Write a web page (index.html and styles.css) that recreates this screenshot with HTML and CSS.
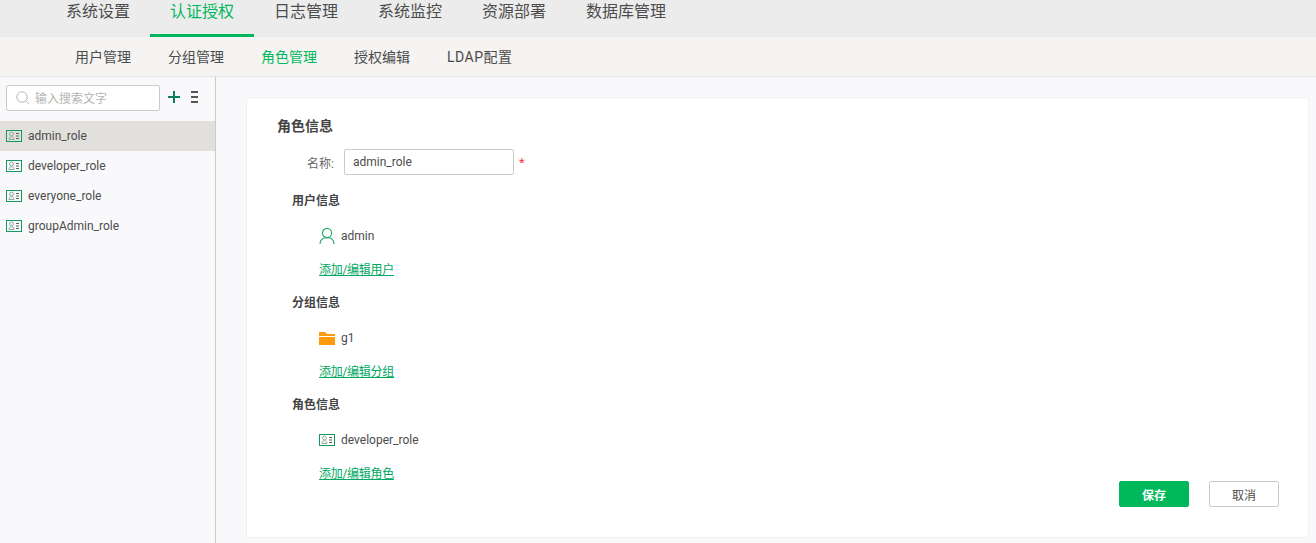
FILE: index.html
```html
<!DOCTYPE html>
<html lang="zh-CN">
<head>
<meta charset="utf-8">
<title>角色管理</title>
<link rel="stylesheet" href="styles.css">
</head>
<body>
<svg class="defs" width="0" height="0" aria-hidden="true">
  <symbol id="role" viewBox="0 0 16 12">
    <rect x="0.5" y="0.5" width="15" height="11" fill="none" stroke="#129a58"/>
    <circle cx="5.5" cy="4" r="1.9" fill="none" stroke="#8fa89b"/>
    <path d="M3 9.5c0-2 1-2.8 2.5-2.8s2.5.8 2.5 2.8z" fill="none" stroke="#8fa89b"/>
    <path d="M10 3.5h3M10 6h3M10 8.5h3" stroke="#56665f"/>
  </symbol>
</svg>
<nav class="topnav">
  <a class="tab">系统设置</a>
  <a class="tab active">认证授权</a>
  <a class="tab">日志管理</a>
  <a class="tab">系统监控</a>
  <a class="tab">资源部署</a>
  <a class="tab">数据库管理</a>
</nav>
<nav class="subnav">
  <a class="subtab">用户管理</a>
  <a class="subtab">分组管理</a>
  <a class="subtab active">角色管理</a>
  <a class="subtab">授权编辑</a>
  <a class="subtab ldap">LDAP配置</a>
</nav>
<div class="main">
  <aside class="sidebar">
    <div class="toolbar">
      <div class="search">
        <svg class="search-icon" viewBox="0 0 14 14" width="14" height="14"><circle cx="6" cy="6" r="5.2" fill="none" stroke="#b8b8b4"/><path d="M9.8 9.8l3.2 3.2" stroke="#b8b8b4"/></svg>
        <span class="placeholder">输入搜索文字</span>
      </div>
      <svg class="plus" viewBox="0 0 12 12" width="12" height="12"><path d="M6 0v12M0 6h12" stroke="#0b7f5e" stroke-width="2"/></svg>
      <svg class="more" viewBox="0 0 7 12" width="7" height="12"><path d="M0 1h7M0 6h7M0 11h7" stroke="#555" stroke-width="2"/></svg>
    </div>
    <ul class="role-list">
      <li class="role selected"><svg class="role-icon"><use href="#role"/></svg>admin_role</li>
      <li class="role"><svg class="role-icon"><use href="#role"/></svg>developer_role</li>
      <li class="role"><svg class="role-icon"><use href="#role"/></svg>everyone_role</li>
      <li class="role"><svg class="role-icon"><use href="#role"/></svg>groupAdmin_role</li>
    </ul>
  </aside>
  <section class="content">
    <div class="card">
      <h2 class="title">角色信息</h2>
      <div class="name-row">
        <label class="name-label">名称:</label>
        <div class="name-input">admin_role</div>
        <span class="req">*</span>
      </div>
      <h3 class="sub">用户信息</h3>
      <div class="entry">
        <svg class="user-icon" viewBox="0 0 16 18" width="16" height="18"><circle cx="8" cy="6" r="4.6" fill="none" stroke="#2bab6b" stroke-width="1.2"/><path d="M1 17c0-4 3-6.4 7-6.4s7 2.4 7 6.4" fill="none" stroke="#2bab6b" stroke-width="1.2"/></svg>
        <span>admin</span>
      </div>
      <a class="edit">添加/编辑用户</a>
      <h3 class="sub">分组信息</h3>
      <div class="entry">
        <svg class="folder-icon" viewBox="0 0 16 13" width="16" height="13"><path d="M0 0h6l2 2h8v2H0z" fill="#ff9a0e"/><path d="M0 5h16v8H0z" fill="#ff9a0e"/></svg>
        <span>g1</span>
      </div>
      <a class="edit">添加/编辑分组</a>
      <h3 class="sub">角色信息</h3>
      <div class="entry">
        <svg class="role-icon"><use href="#role"/></svg>
        <span>developer_role</span>
      </div>
      <a class="edit">添加/编辑角色</a>
      <div class="actions">
        <button class="btn primary">保存</button>
        <button class="btn">取消</button>
      </div>
    </div>
  </section>
</div>
</body>
</html>
```
FILE: styles.css
```css
* { box-sizing: border-box; }
html, body { height: 100%; }
body {
  margin: 0;
  height: 543px;
  overflow: hidden;
  display: flex;
  flex-direction: column;
  font-family: Roboto, "Noto Sans CJK SC", sans-serif;
  font-size: 12px;
  color: #4c4c4c;
  background: #f9f9fb;
}
.defs { position: absolute; }
.topnav {
  display: flex;
  height: 37px;
  padding-left: 46px;
  background: #ececec;
}
.tab {
  padding: 0 20px;
  height: 37px;
  font-size: 16px;
  line-height: 23px;
  color: #4c4c4c;
}
.tab.active {
  color: #00b85c;
  border-bottom: 3px solid #00b85c;
}
.subnav {
  display: flex;
  gap: 37px;
  height: 40px;
  padding-left: 75px;
  background: #f5f4f2;
  border-bottom: 1px solid #e6e6e6;
}
.subtab {
  font-size: 14px;
  line-height: 41px;
  color: #4c4c4c;
}
.subtab.active { color: #00b85c; }
.ldap { letter-spacing: 0.5px; }
.main { flex: 1; display: flex; min-height: 0; }
.sidebar {
  width: 216px;
  flex: none;
  border-right: 1px solid #cdcbc6;
}
.toolbar {
  display: flex;
  align-items: flex-start;
  height: 44px;
  padding: 8px 0 0 6px;
}
.search {
  display: flex;
  align-items: center;
  gap: 5px;
  width: 154px;
  height: 26px;
  padding-left: 9px;
  background: #fff;
  border: 1px solid #cdcbc6;
  border-radius: 2px;
  color: #b4b4b0;
}
.placeholder { margin-top: -2px; }
.plus { margin: 6px 0 0 8px; }
.more { margin: 6px 0 0 11px; }
.role-list { list-style: none; margin: 0; padding: 0; }
.role {
  display: flex;
  align-items: center;
  gap: 6px;
  height: 30px;
  padding-left: 6px;
}
.role.selected { background: #e1e0dd; }
.role-icon { width: 16px; height: 12px; flex: none; }
.content { flex: 1; padding: 20px 7px 5px 30px; min-width: 0; }
.card {
  position: relative;
  height: 441px;
  padding: 20px 30px 0;
  background: #fff;
  border: 1px solid #f0f0f0;
  border-radius: 3px;
}
.title {
  margin: 0;
  font-size: 14px;
  font-weight: 700;
  line-height: 16px;
  color: #444;
}
.sub {
  margin: 0 0 0 15px;
  font-size: 12px;
  font-weight: 700;
  line-height: 16px;
  color: #444;
}
.name-row {
  display: flex;
  align-items: center;
  height: 26px;
  margin: 15px 0 18px;
}
.name-label {
  width: 57px;
  text-align: right;
  color: #666;
}
.name-input {
  width: 170px;
  height: 26px;
  margin-left: 10px;
  padding-left: 8px;
  line-height: 24px;
  border: 1px solid #cdcbc6;
  border-radius: 2px;
}
.req { margin-left: 5px; color: #f03c3c; font-size: 13px; }
.entry {
  display: flex;
  align-items: center;
  height: 18px;
  gap: 6px;
  margin: 18px 0 0 42px;
}
.edit {
  display: block;
  width: max-content;
  margin: 17px 0 17px 42px;
  line-height: 16px;
  letter-spacing: -0.28px;
  color: #00a862;
  text-decoration: underline;
}
.actions {
  position: absolute;
  right: 29px;
  bottom: 30px;
  display: flex;
  gap: 20px;
}
.btn {
  width: 70px;
  height: 26px;
  padding: 0;
  font: inherit;
  color: #4c4c4c;
  background: #fff;
  border: 1px solid #cdcbc6;
  border-radius: 2px;
}
.btn.primary {
  font-weight: 700;
  color: #fff;
  background: #00b85c;
  border-color: #00b85c;
}
```
